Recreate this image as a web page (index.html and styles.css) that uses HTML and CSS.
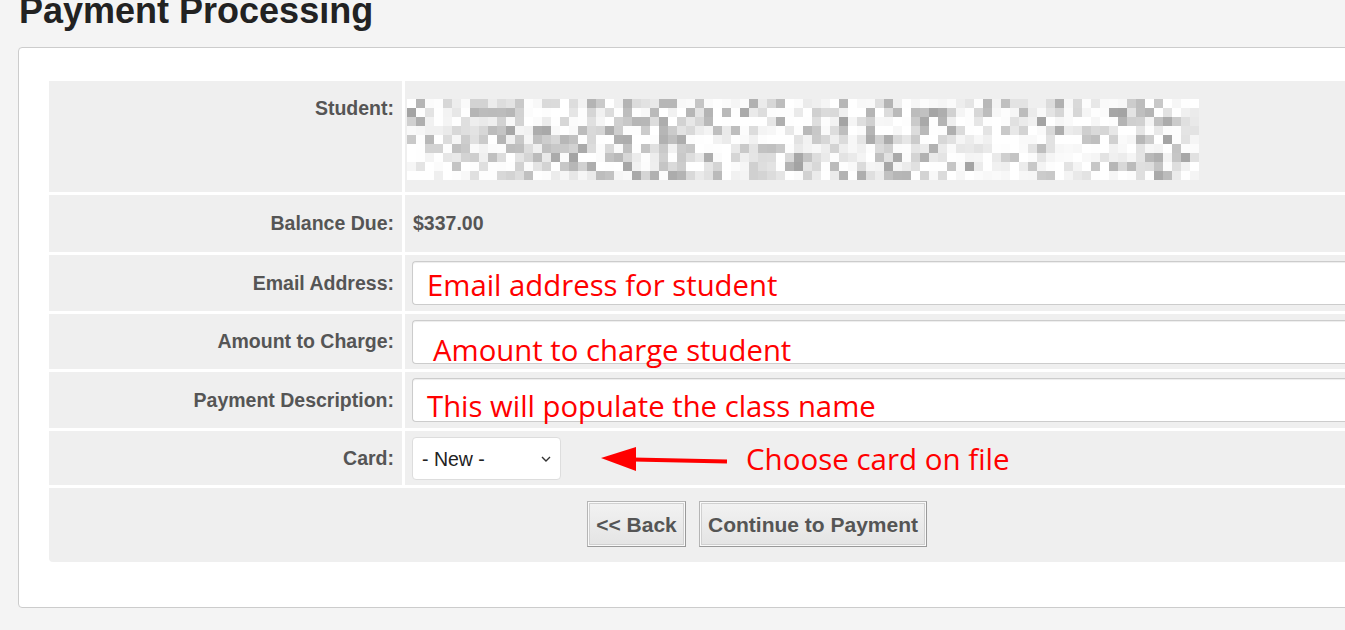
FILE: index.html
```html
<!DOCTYPE html>
<html lang="en">
<head>
  <meta charset="UTF-8" />
  <title>Payment Processing</title>
  <link rel="stylesheet" href="styles.css">
</head>
<body>
  <h1>Payment Processing</h1>

  <div class="panel">
    <div class="pay-form">
      <div class="label label-top">Student:</div>
      <div class="value value-student">
        <canvas id="student-name" width="88" height="9"></canvas>
      </div>

      <div class="label">Balance Due:</div>
      <div class="value value-text">$337.00</div>

      <div class="label">Email Address:</div>
      <div class="value">
        <div class="field"><span class="note note-email">Email address for student</span></div>
      </div>

      <div class="label">Amount to Charge:</div>
      <div class="value">
        <div class="field"><span class="note note-low">Amount to charge student</span></div>
      </div>

      <div class="label">Payment Description:</div>
      <div class="value">
        <div class="field"><span class="note note-mid">This will populate the class name</span></div>
      </div>

      <div class="label">Card:</div>
      <div class="value">
        <div class="select-wrap">
          <select>
            <option>- New -</option>
          </select>
          <svg class="chevron" width="10" height="6" viewBox="0 0 10 6"><path d="M1 1l4 4 4-4" fill="none" stroke="#333" stroke-width="1.4"/></svg>
        </div>
        <svg class="arrow" width="130" height="30" viewBox="0 0 130 30">
          <polygon points="1,14 36,3 36,27" fill="#ff0000"/>
          <line x1="33" y1="15.5" x2="127" y2="17.5" stroke="#ff0000" stroke-width="4"/>
        </svg>
        <span class="note note-card">Choose card on file</span>
      </div>

      <div class="actions">
        <button type="button" class="btn">&lt;&lt; Back</button>
        <button type="button" class="btn btn-wide">Continue to Payment</button>
      </div>
    </div>
  </div>

  <script src="script.js"></script>
</body>
</html>
```

FILE: styles.css
```css
html, body {
  overflow: hidden;
}
body {
  font-family: "Liberation Sans", Arial, sans-serif;
  margin: 0;
  background-color: #f4f4f4;
  color: #555;
}
h1 {
  font-size: 36px;
  line-height: 40px;
  color: #222;
  margin: -9px 0 16px 19px;
}
.panel {
  margin-left: 18px;
  width: 1476px;
  padding: 33px 30px 45px 30px;
  background: #fff;
  border: 1px solid #ccc;
  border-radius: 4px;
}
.pay-form {
  display: grid;
  grid-template-columns: 353px 1fr;
  grid-template-rows: 111px 57px 56px 55px 56px 54px 74px;
  gap: 3px;
  width: 1416px;
}
.label {
  display: flex;
  align-items: center;
  justify-content: flex-end;
  padding-right: 8px;
  background: #efefef;
  font-size: 19.5px;
  font-weight: bold;
}
.label-top {
  align-items: flex-start;
  padding-top: 15px;
  line-height: 24px;
}
.value {
  display: flex;
  align-items: center;
  padding-left: 7px;
  background: #efefef;
}
.value-student {
  align-items: flex-start;
  padding: 18px 0 0 2px;
}
#student-name {
  width: 792px;
  height: 81px;
  image-rendering: pixelated;
}
.value-text {
  padding-left: 8px;
  font-size: 19.5px;
  font-weight: bold;
}
.field {
  flex: 1;
  height: 44px;
  box-sizing: border-box;
  padding-left: 14px;
  background: #fff;
  border: 1px solid #ccc;
  border-radius: 4px 0 0 4px;
  border-right: none;
  box-shadow: inset 0 1px 1px rgba(0, 0, 0, 0.075);
  white-space: nowrap;
}
.note {
  display: block;
  font-family: "Open Sans", "Noto Sans", sans-serif;
  font-size: 29.3px;
  line-height: 42px;
  color: #ff0000;
}
.note-email {
  padding-top: 2px;
}
.note-low {
  padding: 8px 0 0 6px;
}
.note-mid {
  padding-top: 6px;
}
.note-card {
  margin-left: 16px;
  margin-top: 1px;
  font-size: 29.5px;
}
.select-wrap {
  position: relative;
}
select {
  appearance: none;
  width: 149px;
  height: 43px;
  margin-top: 1px;
  padding: 0 9px;
  font-family: "Liberation Sans", Arial, sans-serif;
  font-size: 19.5px;
  color: #222;
  background: #fff;
  border: 1px solid #ddd;
  border-radius: 4px;
}
.chevron {
  position: absolute;
  right: 10px;
  top: 20px;
}
.arrow {
  margin-left: 39px;
  margin-top: 1px;
}
.actions {
  grid-column: 1 / -1;
  display: flex;
  justify-content: center;
  align-items: center;
  gap: 13px;
  background: #efefef;
  border-radius: 0 0 4px 4px;
}
.btn {
  height: 46px;
  width: 99px;
  margin-top: -2px;
  padding: 1px 0 0;
  font-family: "Liberation Sans", Arial, sans-serif;
  font-size: 21px;
  font-weight: bold;
  color: #555;
  background: linear-gradient(#f2f2f2, #e4e4e4);
  border: 1px solid #b5b5b5;
  border-right-color: #999;
  border-bottom-color: #999;
  box-shadow: inset 0 0 0 1px #fafafa, inset 0 0 0 2px #d0d0d0;
}
.btn-wide {
  width: 228px;
}
```

FILE: script.js
```js
// pixelated placeholder for the student's name
const canvas = document.getElementById("student-name");
const ctx = canvas.getContext("2d");

let seed = 7;
function rand() {
  seed = (seed * 16807) % 2147483647;
  return seed / 2147483647;
}

for (let y = 0; y < canvas.height; y++) {
  for (let x = 0; x < canvas.width; x++) {
    const shade = 255 - Math.round(Math.pow(rand(), 2.6) * 92);
    ctx.fillStyle = `rgb(${shade},${shade},${shade})`;
    ctx.fillRect(x, y, 1, 1);
  }
}
```
